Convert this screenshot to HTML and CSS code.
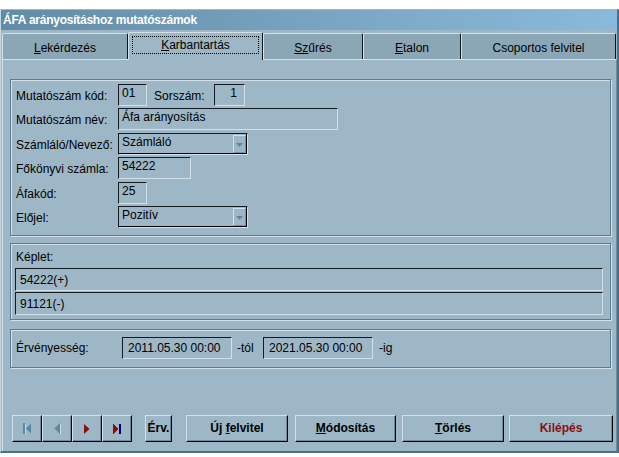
FILE: index.html
```html
<!DOCTYPE html>
<html lang="hu">
<head>
<meta charset="utf-8">
<title>ÁFA arányosításhoz mutatószámok</title>
<link rel="stylesheet" href="styles.css">
</head>
<body>
<div class="window">
  <div class="titlebar">ÁFA arányosításhoz mutatószámok</div>
  <div class="tabs">
    <div class="tab t1"><span><u>L</u>ekérdezés</span></div>
    <div class="tab t2 active"><span class="focus"><span><u>K</u>arbantartás</span></span></div>
    <div class="tab t3"><span><u>Sz</u>űrés</span></div>
    <div class="tab t4"><span><u>E</u>talon</span></div>
    <div class="tab t5"><span>Csoportos felvitel</span></div>
  </div>
  <div class="page">
    <div class="group g1">
      <div class="row">
        <span class="label">Mutatószám kód:</span>
        <span class="field w29">01</span>
        <span class="label sub">Sorszám:</span>
        <span class="field w31 right">1</span>
      </div>
      <div class="row">
        <span class="label">Mutatószám név:</span>
        <span class="field w220">Áfa arányosítás</span>
      </div>
      <div class="row">
        <span class="label">Számláló/Nevező:</span>
        <span class="field combo w130"><span class="ctext">Számláló</span><span class="arrow"><svg width="7" height="4" viewBox="0 0 7 4"><polygon points="0,0 7,0 3.5,4" fill="#5a87a6"/></svg></span></span>
      </div>
      <div class="row">
        <span class="label">Főkönyvi számla:</span>
        <span class="field w73">54222</span>
      </div>
      <div class="row">
        <span class="label">Áfakód:</span>
        <span class="field w29">25</span>
      </div>
      <div class="row">
        <span class="label">Előjel:</span>
        <span class="field combo w130"><span class="ctext">Pozitív</span><span class="arrow"><svg width="7" height="4" viewBox="0 0 7 4"><polygon points="0,0 7,0 3.5,4" fill="#5a87a6"/></svg></span></span>
      </div>
    </div>

    <div class="group g2">
      <div class="glabel">Képlet:</div>
      <div class="line">54222(+)</div>
      <div class="line">91121(-)</div>
    </div>

    <div class="group g3">
      <span class="label wide">Érvényesség:</span>
      <span class="field date">2011.05.30 00:00</span>
      <span class="suffix tol">-tól</span>
      <span class="field date">2021.05.30 00:00</span>
      <span class="suffix ig">-ig</span>
    </div>

    <div class="buttons">
      <div class="nav">
        <div class="btn navbtn">
          <svg width="9" height="11" viewBox="0 0 9 11" shape-rendering="crispEdges">
            <rect x="0" y="0" width="2" height="11" fill="#5a87a6"/>
            <rect x="2" y="1" width="1" height="10" fill="#c9dae3"/>
            <polygon points="8,0 3,5.5 8,11" fill="#5a87a6"/>
          </svg>
        </div>
        <div class="btn navbtn">
          <svg width="7" height="11" viewBox="0 0 7 11">
            <polygon points="6,0 0.5,5.5 6,11" fill="#5a87a6"/>
            <rect x="6" y="1" width="1" height="10" fill="#c9dae3"/>
          </svg>
        </div>
        <div class="btn navbtn">
          <svg width="6" height="10" viewBox="0 0 6 10">
            <polygon points="0,0 5.5,5 0,10" fill="#8a0c0c"/>
          </svg>
        </div>
        <div class="btn navbtn">
          <svg width="9" height="10" viewBox="0 0 9 10" shape-rendering="crispEdges">
            <polygon points="0,0 5,5 0,10" fill="#8a0c0c"/>
            <rect x="6" y="0" width="2" height="10" fill="#00007a"/>
          </svg>
        </div>
      </div>
      <div class="btn txt b-erv"><span>Érv.</span></div>
      <div class="btn txt b-uj"><span>Új <u>f</u>elvitel</span></div>
      <div class="btn txt b-mod"><span><u>M</u>ódosítás</span></div>
      <div class="btn txt b-torl"><span><u>T</u>örlés</span></div>
      <div class="btn txt b-kil"><span>Kilépés</span></div>
    </div>
  </div>
</div>
</body>
</html>
```

FILE: styles.css
```css
* { box-sizing: border-box; }

html, body {
  margin: 0;
  padding: 0;
  background: #ffffff;
}

body {
  font-family: "Liberation Sans", Arial, sans-serif;
  font-size: 12px;
  line-height: 14px;
  color: #000;
}

u { text-decoration: underline; text-underline-offset: 1px; }

.window {
  width: 619px;
  height: 444px;
  margin-top: 9px;
  border-top: 1px solid #aab4bc;
  border-left: 1px solid #c6d7e0;
  border-right: 2px solid #4f6e83;
  border-bottom: 2px solid #4f6e83;
  background: #9db7c6;
  display: flex;
  flex-direction: column;
}

.titlebar {
  height: 20px;
  padding-left: 2px;
  padding-top: 3px;
  font-weight: bold;
  letter-spacing: -0.25px;
  color: #ffffff;
  background: linear-gradient(to right, #628ba6 0%, #7aa6c3 55%, #89badb 100%);
  white-space: nowrap;
}

.tabs {
  height: 29px;
  padding-top: 2px;
  padding-left: 1px;
  display: flex;
  align-items: flex-end;
  position: relative;
  z-index: 1;
}

.tab {
  height: 26px;
  background: #8ba6b5;
  border-top: 1px solid #d3e2ea;
  border-left: 1px solid #d3e2ea;
  border-right: 1px solid #0d1418;
  border-radius: 2px 2px 0 0;
  display: flex;
  justify-content: center;
  padding-top: 7px;
}

.t1 { width: 126px; }
.t2 { width: 135px; }
.t3 { width: 100px; }
.t4 { width: 98px; }
.t5 { width: 155px; }

.tab.active {
  height: 28px;
  margin-bottom: -1px;
  background: #9db7c6;
  padding: 3px 3px 0 3px;
}

.focus {
  display: flex;
  justify-content: center;
  align-items: center;
  width: 100%;
  height: 18px;
  border: 1px dotted #000;
}

.page {
  flex: 1;
  margin-left: 1px;
  border-top: 1px solid #d3e2ea;
  border-left: 1px solid #d3e2ea;
  border-right: 1px solid #6f8da0;
  padding-left: 7px;
}

.group {
  width: 601px;
  border: 1px solid #5a7b91;
  box-shadow: inset 1px 1px 0 #d3e2ea, 1px 1px 0 #d3e2ea;
}

.g1 {
  margin-top: 19px;
  height: 157px;
  padding: 4px 0 0 5px;
  display: flex;
  flex-direction: column;
  gap: 2.4px;
}

.row {
  display: flex;
  align-items: flex-start;
  height: 22px;
}

.label {
  width: 102px;
  padding-top: 5px;
  white-space: nowrap;
}

.label.sub {
  width: 60px;
  margin-left: 7px;
}

.field {
  height: 22px;
  border: 1px solid;
  border-color: #141c22 #d3e2ea #d3e2ea #141c22;
  padding: 1px 3px 0 3px;
  white-space: nowrap;
}

.field.right { text-align: right; padding-right: 7px; }

.w29 { width: 29px; }
.w31 { width: 31px; }
.w73 { width: 73px; }
.w130 { width: 130px; }
.w220 { width: 220px; }

.combo {
  display: flex;
  box-shadow: inset -1px -1px 0 #000;
  padding-right: 1px;
}

.ctext { flex: 1; }

.arrow {
  width: 13px;
  height: 18px;
  border-top: 1px solid #d3e2ea;
  border-left: 1px solid #d3e2ea;
  border-right: 1px solid #7693a6;
  border-bottom: 1px solid #7693a6;
  display: flex;
  align-items: center;
  justify-content: center;
  padding-top: 2px;
}

.arrow svg { display: block; }

.g2 {
  margin-top: 7px;
  height: 77px;
  padding: 6px 0 0 4px;
}

.glabel {
  padding-left: 1px;
  height: 14px;
  margin-bottom: 4px;
}

.line {
  width: 588px;
  height: 23px;
  margin-bottom: 1px;
  border: 1px solid;
  border-color: #141c22 #d3e2ea #d3e2ea #141c22;
  padding: 4px 0 0 4px;
}

.g3 {
  margin-top: 9px;
  height: 39px;
  padding: 7px 0 0 5px;
  display: flex;
  align-items: flex-start;
}

.label.wide {
  width: 106px;
  padding-top: 4px;
}

.field.date {
  width: 110px;
  padding: 3px 0 0 5px;
}

.suffix { padding-top: 4px; }
.suffix.tol { width: 31px; padding-left: 5px; }
.suffix.ig { padding-left: 6px; }

.buttons {
  margin-top: 47px;
  margin-left: 2px;
  display: flex;
  align-items: flex-start;
}

.nav { display: flex; }

.btn {
  height: 27px;
  border: 1px solid;
  border-color: #d3e2ea #000 #000 #d3e2ea;
  box-shadow: inset -1px -1px 0 #6f8da0;
  display: flex;
  align-items: center;
  justify-content: center;
  font-weight: bold;
  white-space: nowrap;
}

.navbtn { width: 30px; }
.navbtn svg { display: block; }

.txt { padding-bottom: 1px; }

.b-erv { width: 27px; margin-left: 13px; }
.b-uj { width: 102px; margin-left: 14px; }
.b-mod { width: 101px; margin-left: 7px; }
.b-torl { width: 102px; margin-left: 6px; }
.b-kil { width: 104px; margin-left: 5px; color: #8a1010; }
```
